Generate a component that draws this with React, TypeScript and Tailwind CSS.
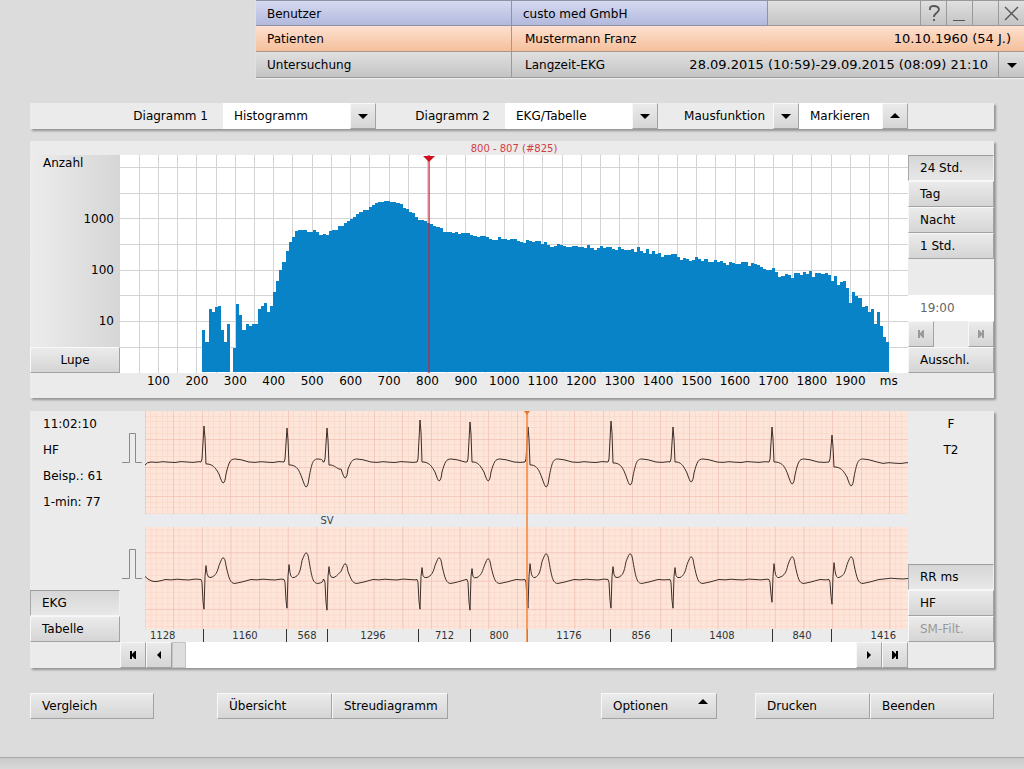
import React from "react";
import clsx from "clsx";

// Top edge of each 8 ms bin, in thirds of a pixel; BIN_BASE means an empty bin
const BIN_BASE = 695;
const BINS = [
  568, 604, 505, 515, 501, 497, 568, 604, 551, 695, 624, 492, 525, 569, 550, 558, 551, 551, 506, 498,
  487, 516, 497, 456, 423, 390, 366, 331, 306, 290, 272, 270, 270, 270, 275, 276, 270, 274, 283, 280,
  283, 273, 269, 268, 257, 256, 247, 241, 237, 231, 222, 214, 210, 208, 199, 194, 188, 185, 184, 181,
  182, 184, 184, 187, 192, 203, 207, 215, 217, 230, 240, 240, 243, 247, 251, 256, 261, 264, 275, 274,
  276, 279, 276, 280, 279, 279, 279, 284, 287, 290, 287, 287, 289, 296, 298, 298, 291, 296, 297, 298,
  297, 296, 303, 305, 307, 300, 301, 304, 303, 302, 312, 306, 315, 319, 317, 312, 314, 316, 321, 319,
  318, 317, 320, 320, 322, 315, 324, 330, 324, 318, 322, 319, 321, 325, 328, 319, 325, 329, 328, 327,
  334, 321, 332, 337, 325, 340, 332, 342, 337, 350, 344, 345, 342, 342, 351, 358, 354, 357, 362, 358,
  351, 355, 363, 355, 365, 366, 360, 364, 363, 368, 373, 365, 369, 372, 371, 366, 366, 376, 369, 371,
  375, 380, 386, 389, 389, 384, 396, 410, 408, 401, 403, 412, 397, 398, 404, 396, 401, 391, 410, 398,
  399, 400, 399, 405, 422, 408, 433, 426, 422, 444, 487, 455, 468, 472, 501, 497, 515, 505, 551, 516,
  558, 590, 605,
];

const FIRST_BIN_X = 82.4;
const BIN_W = 3.08;

const AXIS = Array.from({ length: 19 }, (_, i) => (i + 1) * 100);

type Beat = {
  x: number;
  t: number;
  // upper lead
  r: number;
  s: number;
  depth: number;
  // lower lead
  q: number;
  j: number;
  peak: number;
};

const BEATS: Beat[] = [
  { x: 59, t: 78, r: 15, s: 53, depth: 72, q: 83, j: 39, peak: 31 },
  { x: 142, t: 161, r: 17, s: 54, depth: 76, q: 82, j: 38, peak: 26 },
  { x: 182, t: 200, r: 17, s: 54, depth: 67, q: 84, j: 40, peak: 37 },
  { x: 275, t: 294, r: 9, s: 51, depth: 70, q: 83, j: 41, peak: 31 },
  { x: 325, t: 343, r: 11, s: 51, depth: 70, q: 84, j: 42, peak: 32 },
  { x: 383, t: 401, r: 16, s: 54, depth: 76, q: 82, j: 37, peak: 27 },
  { x: 466, t: 485, r: 10, s: 52, depth: 74, q: 82, j: 40, peak: 27 },
  { x: 528, t: 546, r: 16, s: 51, depth: 71, q: 82, j: 41, peak: 30 },
  { x: 627, t: 647, r: 16, s: 51, depth: 73, q: 76, j: 37, peak: 30 },
  { x: 687, t: 706, r: 24, s: 56, depth: 75, q: 78, j: 36, peak: 30 },
];

const INTERVALS = [
  { label: "1128", size: 58 },
  { label: "1160", size: 83 },
  { label: "568", size: 41 },
  { label: "1296", size: 91 },
  { label: "712", size: 52 },
  { label: "800", size: 57 },
  { label: "1176", size: 83 },
  { label: "856", size: 61 },
  { label: "1408", size: 101 },
  { label: "840", size: 59 },
  { label: "1416", size: 77 },
];

// Slightly uneven line between two beats
function drift(from: number, to: number, base: number) {
  let d = "";
  for (let x = from + 6, i = 0; x < to; x += 6, i++) {
    d += `L${x} ${base + [0.4, -0.3, 0.2, 0.5, -0.4, 0][i % 6]}`;
  }
  return d + `L${to} ${base}`;
}

function upperTrace() {
  const b = 51;
  let d = `M0 54Q2 51 6 51`;
  let at = 6;
  BEATS.forEach(({ x, t, r, s, depth }, i) => {
    const next = BEATS[i + 1]?.x ?? 762;
    const end = Math.min(t + 26, next - 4);
    d += drift(at, x - 3, b);
    d += `L${x - 2} ${b - 3}L${x} ${r}L${x + 1} ${r + 12}L${x + 2} ${s}L${x + 4} ${s}`;
    d += `C${t - 9} ${s + 1} ${t - 7} ${s + 5} ${t - 4} ${depth - 9}`;
    d += `Q${t - 1} ${depth} ${t} ${depth}Q${t + 2} ${depth} ${t + 3} ${depth - 9}`;
    d += `C${t + 6} ${b} ${t + 7} ${b - 3} ${t + 12} ${b - 3}`;
    d += `Q${t + 17} ${b - 3} ${end} ${b}`;
    at = end;
  });
  return d + drift(at, 763, 52);
}

function lowerTrace() {
  const b = 53;
  let d = `M0 50Q6 56 12 55T20 ${b}`;
  let at = 20;
  BEATS.forEach(({ x, t, q, j, peak }, i) => {
    const next = BEATS[i + 1]?.x ?? 762;
    const end = Math.min(t + 28, next - 4);
    d += drift(at, x - 3, b);
    d += `L${x - 2} ${b + 3}L${x - 1} ${q - 8}L${x} ${q}L${x + 1} 50L${x + 2} ${j}L${x + 3} ${j + 8}`;
    d += `Q${x + 4} 52 ${x + 7} 51`;
    d += `C${t - 7} 49 ${t - 6} 46 ${t - 4} ${peak + 8}`;
    d += `Q${t - 1} ${peak} ${t} ${peak}Q${t + 2} ${peak} ${t + 3} ${peak + 8}`;
    d += `C${t + 6} 52 ${t + 7} 57 ${t + 12} 57`;
    d += `Q${t + 18} 56 ${end} ${b}`;
    at = end;
  });
  return d + drift(at, 763, 52);
}

const raised =
  "border border-t-[#f8f8f8] border-l-[#f8f8f8] border-r-[#a2a2a2] border-b-[#a2a2a2] bg-linear-to-b from-[#ebebeb] to-[#d5d5d5]";
const sunken =
  "border border-t-[#9c9c9c] border-l-[#a8a8a8] border-r-[#f0f0f0] border-b-[#f6f6f6] bg-linear-to-b from-[#d6d6d6] to-[#e8e8e8]";
const panel = "bg-[#ebebeb] shadow-[2px_2px_2px_rgba(0,0,0,0.32)]";

function Button({
  children,
  pressed,
  disabled,
  className,
}: {
  children: React.ReactNode;
  pressed?: boolean;
  disabled?: boolean;
  className?: string;
}) {
  return (
    <button
      type="button"
      disabled={disabled}
      className={clsx(
        "flex h-[26px] items-center px-[11px] text-left whitespace-nowrap",
        pressed ? sunken : raised,
        disabled && "text-[#999]",
        className,
      )}
    >
      {children}
    </button>
  );
}

type ArrowKind = "up" | "down" | "left" | "right" | "first" | "last";

const ARROWS: Record<ArrowKind, string> = {
  up: "M1 8L6 3L11 8Z",
  down: "M1 4H11L6 9Z",
  left: "M8 2V10L4 6Z",
  right: "M4 2V10L8 6Z",
  first: "M3 2H5V5L8 2H9V10H8L5 7V10H3Z",
  last: "M9 2H7V5L4 2H3V10H4L7 7V10H9Z",
};

function Arrow({ kind }: { kind: ArrowKind }) {
  return (
    <svg width="12" height="12" viewBox="0 0 12 12" fill="currentColor" aria-hidden="true">
      <path d={ARROWS[kind]} />
    </svg>
  );
}

function IconButton({ kind, label, disabled }: { kind: ArrowKind; label: string; disabled?: boolean }) {
  return (
    <button
      type="button"
      aria-label={label}
      disabled={disabled}
      className={clsx("flex h-[26px] w-[26px] shrink-0 items-center justify-center", raised, disabled && "text-[#999]")}
    >
      <Arrow kind={kind} />
    </button>
  );
}

function Select({
  id,
  value,
  label,
  arrow = "down",
  className,
}: {
  id: string;
  value: string;
  label?: string;
  arrow?: ArrowKind;
  className: string;
}) {
  return (
    <div className={clsx("relative h-[26px]", className)}>
      <select id={id} aria-label={label} className="h-full w-full appearance-none bg-white pr-7 pl-[11px]">
        <option>{value}</option>
      </select>
      <span
        className={clsx("pointer-events-none absolute inset-y-0 right-0 flex w-[26px] items-center justify-center", raised)}
      >
        <Arrow kind={arrow} />
      </span>
    </div>
  );
}

function Header() {
  const cell = "flex items-center border-b px-[11px] pt-px";
  const gray = "bg-linear-to-b from-[#e0e0e0] to-[#c4c4c4] border-[#9a9a9a]";
  const peach = "bg-linear-to-b from-[#fde0d0] to-[#f5c09c] border-[#a8968c]";
  const blue = "bg-linear-to-b from-[#d6d9f0] to-[#b2b9dc] border-[#8f93a8]";
  const tool = "flex w-[26px] items-center justify-center border-l border-l-[#9a9a9a] text-[#555]";
  return (
    <header className="ml-[25%] grid grid-cols-3 auto-rows-[26px] shadow-[0_1px_1px_#f0f0f0]">
      <div className={clsx(cell, blue, "border-t border-r")}>Benutzer</div>
      <div className={clsx(cell, blue, "border-t border-r")}>custo med GmbH</div>
      <div className={clsx("flex justify-end border-t border-b", gray)}>
        <button type="button" aria-label="Hilfe" className={tool}>
          <svg width="16" height="20" viewBox="0 0 16 20" fill="none" stroke="currentColor" strokeWidth="1.8">
            <path d="M4 7V5Q4 3 8 3T13 6Q13 8 11 9.500T8 13V14M8 16V18" />
          </svg>
        </button>
        <button type="button" aria-label="Minimieren" className={tool}>
          <svg width="16" height="20" viewBox="0 0 16 20" fill="none" stroke="currentColor">
            <path d="M1 17.500H13" />
          </svg>
        </button>
        <button type="button" aria-label="Fenster" className={tool} />
        <button type="button" aria-label="Schließen" className={tool}>
          <svg width="16" height="20" viewBox="0 0 16 20" fill="none" stroke="currentColor" strokeWidth="1.4">
            <path d="M1 4L14 17M14 4L1 17" />
          </svg>
        </button>
      </div>

      <div className={clsx(cell, peach, "border-r")}>Patienten</div>
      <div className={clsx(cell, peach, "col-span-2 justify-between")}>
        <span className="pl-0.5">Mustermann Franz</span>
        <span className="pr-0.5 text-[13px]">10.10.1960 (54 J.)</span>
      </div>

      <div className={clsx(cell, gray, "border-r")}>Untersuchung</div>
      <div className={clsx("col-span-2 flex items-center border-b pl-[13px]", gray)}>
        <span className="pt-px">Langzeit-EKG</span>
        <span className="ml-auto pt-px pr-2.5 text-[13px]">28.09.2015 (10:59)-29.09.2015 (08:09) 21:10</span>
        <button
          type="button"
          aria-label="Untersuchung wählen"
          className="flex h-full w-[26px] items-center justify-center border-l border-[#9a9a9a]"
        >
          <Arrow kind="down" />
        </button>
      </div>
    </header>
  );
}

function Toolbar() {
  return (
    <div className={clsx("mt-[25px] flex h-[26px] items-center", panel)}>
      <label htmlFor="diagram-1" className="w-[193px] pr-[15px] text-right">
        Diagramm 1
      </label>
      <Select id="diagram-1" value="Histogramm" className="w-[153px]" />
      <label htmlFor="diagram-2" className="w-[129px] pr-[15px] text-right">
        Diagramm 2
      </label>
      <Select id="diagram-2" value="EKG/Tabelle" className="w-[153px]" />
      <span className="w-[115px] pr-2 text-right">Mausfunktion</span>
      <IconButton kind="down" label="Mausfunktion" />
      <Select id="mouse-mode" value="Markieren" label="Mausmodus" arrow="up" className="w-[109px]" />
    </div>
  );
}

function HistogramChart() {
  return (
    <svg className="block h-[218px] w-full" viewBox="0 0 788 218" preserveAspectRatio="none">
      <rect width="788" height="218" fill="#fff" />
      <g stroke="#d3d3d3" shapeRendering="crispEdges">
        {Array.from({ length: 40 }, (_, i) => (
          <line key={i} x1={(i + 1) * 19.22} x2={(i + 1) * 19.22} y1="0" y2="218" />
        ))}
        {Array.from({ length: 8 }, (_, i) => (
          <line key={i} x1="0" x2="788" y1={12.5 + i * 25.66} y2={12.5 + i * 25.66} />
        ))}
      </g>
      <path
        fill="#0883c7"
        shapeRendering="crispEdges"
        d={
          `M${FIRST_BIN_X} 217` +
          BINS.map((v, i) => `V${217 - (BIN_BASE - v) / 3}H${(FIRST_BIN_X + (i + 1) * BIN_W).toFixed(2)}`).join("") +
          "V217Z"
        }
      />
      <rect x="308.3" y="0" width="1.5" height="218" fill="#cc2338" fillOpacity="0.85" />
      <path d="M303 1H315L309 7Z" fill="#d0101c" />
    </svg>
  );
}

function HistogramPanel() {
  return (
    <section className={clsx("mt-3 flex", panel)}>
      <div className="mt-[14px] mb-[25px] flex w-[90px] shrink-0 flex-col bg-linear-to-r from-[#ececec] to-[#d6d6d6]">
        <span className="h-4 pl-[13px] leading-4">Anzahl</span>
        <div className="mt-[35px] flex flex-col pr-[6px] text-right leading-[26px]">
          <span>1000</span>
          <span className="mt-[25px]">100</span>
          <span className="mt-[25px]">10</span>
        </div>
        <Button className="mt-auto justify-center">Lupe</Button>
      </div>
      <div className="min-w-0 flex-1">
        <div className="h-[14px] text-center text-[10px] leading-4 text-[#d23c46]">800 - 807 (#825)</div>
        <HistogramChart />
        <div className="flex h-[25px] leading-4">
          <span className="w-0 flex-[5]" />
          {AXIS.map((ms) => (
            <span key={ms} className="flex w-0 flex-[10] justify-center">
              {ms}
            </span>
          ))}
          <span className="w-0 flex-[10] text-center">ms</span>
        </div>
      </div>
      <div className="mt-[14px] mb-[25px] flex w-[86px] shrink-0 flex-col">
        <Button pressed>24 Std.</Button>
        <Button>Tag</Button>
        <Button>Nacht</Button>
        <Button>1 Std.</Button>
        <input
          aria-label="Uhrzeit"
          defaultValue="19:00"
          disabled
          className="mt-auto h-[26px] w-full bg-white px-3 text-[#666]"
        />
        <div className="flex justify-between">
          <IconButton kind="first" label="Stunde zurück" disabled />
          <IconButton kind="last" label="Stunde vor" disabled />
        </div>
        <Button>Ausschl.</Button>
      </div>
    </section>
  );
}

function EcgStrip({ trace, firstLine, className }: { trace: string; firstLine: number; className: string }) {
  return (
    <svg className={clsx("block w-full", className)} viewBox="0 0 763 103" preserveAspectRatio="none">
      <rect width="763" height="103" fill="#fde5d9" />
      <g stroke="#f8d3c5" strokeWidth="1" shapeRendering="crispEdges">
        {Array.from({ length: 133 }, (_, i) => (
          <line key={i} x1={i * 5.73} x2={i * 5.73} y1="0" y2="103" strokeOpacity="0.5" />
        ))}
        {Array.from({ length: 19 }, (_, i) => {
          const y = (firstLine % 5.73) + i * 5.73;
          return <line key={i} x1="0" x2="763" y1={y} y2={y} strokeOpacity="0.5" />;
        })}
      </g>
      <g stroke="#f0b9ab" strokeOpacity="0.55" shapeRendering="crispEdges">
        {Array.from({ length: 27 }, (_, i) => (
          <line key={i} x1={i * 28.65} x2={i * 28.65} y1="0" y2="103" />
        ))}
        {[0, 1, 2].map((i) => (
          <line key={i} x1="0" x2="763" y1={firstLine + i * 28.65} y2={firstLine + i * 28.65} />
        ))}
      </g>
      <path d={trace} fill="none" stroke="#3a2d28" strokeLinejoin="round" />
    </svg>
  );
}

function Calibration() {
  return (
    <svg className="block" width="25" height="30" viewBox="0 0 25 30" fill="none" stroke="#8a8a8a">
      <path d="M2 29.500H9.500V0.500H15.500V29.500H22" />
    </svg>
  );
}

function EcgPanel() {
  return (
    <section className={clsx("mt-[13px]", panel)}>
      <div className="flex">
        <div className="flex w-[90px] shrink-0 flex-col leading-[26px]">
          <div className="flex flex-col pl-[13px]">
            <span>11:02:10</span>
            <span>HF</span>
            <span>Beisp.: 61</span>
            <span>1-min: 77</span>
          </div>
          <Button pressed className="mt-auto">
            EKG
          </Button>
          <Button>Tabelle</Button>
        </div>
        <div className="flex w-[25px] shrink-0 flex-col gap-[86px] pt-[22px]">
          <Calibration />
          <Calibration />
        </div>
        <div className="relative min-w-0 flex-1">
          <EcgStrip trace={upperTrace()} firstLine={28} className="h-[103px]" />
          <div className="h-[13px] bg-[#e9ebee] pl-[23%] text-[10px] leading-[13px] text-[#444]">SV</div>
          <EcgStrip trace={lowerTrace()} firstLine={26} className="h-[102px]" />
          <div
            className="grid h-[13px] text-[10px] leading-[13px] text-[#333]"
            style={{ gridTemplateColumns: INTERVALS.map(({ size }) => `minmax(0, ${size}fr)`).join(" ") }}
          >
            {INTERVALS.map(({ label }, i) => (
              <span
                key={i}
                className={clsx(
                  i === 0 ? "pl-[5px] text-left" : "border-l border-[#333]",
                  i === INTERVALS.length - 1 ? "pr-3 text-right" : i > 0 && "text-center",
                )}
              >
                {label}
              </span>
            ))}
          </div>
          <div className="absolute inset-y-0 left-1/2 -ml-px w-[2px] bg-[#f58a42]/80" />
          <svg className="absolute top-0 left-1/2 -ml-[3px]" width="6" height="4" viewBox="0 0 6 4" fill="#e8762c">
            <path d="M0 0H6L3 4Z" />
          </svg>
        </div>
        <div className="flex w-[86px] shrink-0 flex-col text-center leading-[26px]">
          <span>F</span>
          <span>T2</span>
          <Button pressed className="mt-auto">
            RR ms
          </Button>
          <Button>HF</Button>
          <Button disabled>SM-Filt.</Button>
        </div>
      </div>
      <div className="flex pr-[86px] pl-[90px]">
        <IconButton kind="first" label="Zum Anfang" />
        <IconButton kind="left" label="Zurück" />
        <input
          type="range"
          aria-label="Position"
          defaultValue={0}
          className="h-[26px] min-w-0 flex-1 appearance-none bg-white [&::-webkit-slider-thumb]:h-[26px] [&::-webkit-slider-thumb]:w-[14px] [&::-webkit-slider-thumb]:appearance-none [&::-webkit-slider-thumb]:border [&::-webkit-slider-thumb]:border-[#c4c4c4] [&::-webkit-slider-thumb]:bg-[#dedede]"
        />
        <IconButton kind="right" label="Vor" />
        <IconButton kind="last" label="Zum Ende" />
      </div>
    </section>
  );
}

function Actions() {
  return (
    <div className="mt-[25px] flex">
      <Button className="w-[124px]">Vergleich</Button>
      <Button className="ml-[63px] w-[115px]">Übersicht</Button>
      <Button className="w-[116px]">Streudiagramm</Button>
      <Button className="mr-[38px] ml-auto w-[116px] justify-between">
        Optionen
        <span className="-mr-1 mb-2">
          <Arrow kind="up" />
        </span>
      </Button>
      <Button className="w-[115px]">Drucken</Button>
      <Button className="w-[124px]">Beenden</Button>
    </div>
  );
}

export default function App() {
  return (
    <div className="flex min-h-screen flex-col bg-[#dcdcdc] font-['DejaVu_Sans',Verdana,sans-serif] text-[12px] leading-4 text-black">
      <Header />
      <main className="flex-1 px-[30px]">
        <Toolbar />
        <HistogramPanel />
        <EcgPanel />
        <Actions />
      </main>
      <footer className="h-3 border-t border-[#a8a8a8] bg-linear-to-b from-[#cacaca] to-[#d8d8d8]" />
    </div>
  );
}
